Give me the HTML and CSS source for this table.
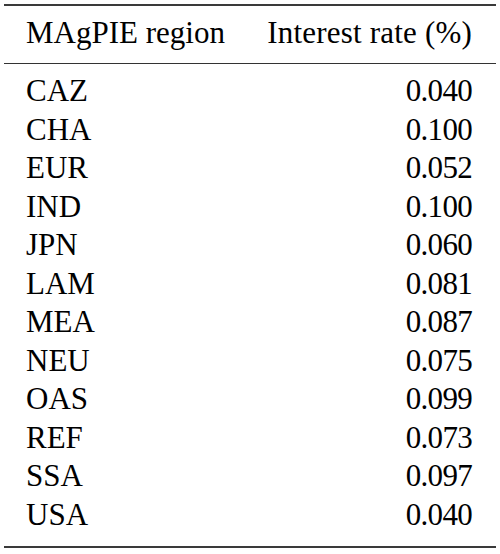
FILE: index.html
```html
<!DOCTYPE html>
<html lang="en">
<head>
    <meta charset="UTF-8">
    <title>Interest rates</title>
    <link rel="stylesheet" href="styles.css">
</head>
<body>
    <table class="rates">
        <thead>
            <tr><th class="col_region">MAgPIE region</th><th class="col_rate">Interest rate (%)</th></tr>
        </thead>
        <tbody>
            <tr><td>CAZ</td><td class="num">0.040</td></tr>
            <tr><td>CHA</td><td class="num">0.100</td></tr>
            <tr><td>EUR</td><td class="num">0.052</td></tr>
            <tr><td>IND</td><td class="num">0.100</td></tr>
            <tr><td>JPN</td><td class="num">0.060</td></tr>
            <tr><td>LAM</td><td class="num">0.081</td></tr>
            <tr><td>MEA</td><td class="num">0.087</td></tr>
            <tr><td>NEU</td><td class="num">0.075</td></tr>
            <tr><td>OAS</td><td class="num">0.099</td></tr>
            <tr><td>REF</td><td class="num">0.073</td></tr>
            <tr><td>SSA</td><td class="num">0.097</td></tr>
            <tr><td>USA</td><td class="num">0.040</td></tr>
        </tbody>
    </table>
</body>
</html>
```

FILE: styles.css
```css
*{
    margin: 0;
    padding: 0;
}
body{
    background: #fff;
    padding: 4px 4px 0;
    font-family: "Liberation Serif", "Times New Roman", serif;
    color: #000;
}
.rates{
    width: 492px;
    border-collapse: collapse;
    font-size: 31px;
    border-top: 2px solid #3a3a3a;
    border-bottom: 2px solid #3a3a3a;
}
.rates th,
.rates td{
    font-weight: normal;
    line-height: 38.5px;
    white-space: nowrap;
}
.rates th:first-child,
.rates td:first-child{
    padding-left: 22px;
}
.rates th:last-child,
.rates td:last-child{
    padding-right: 24px;
}
.rates thead th{
    padding-top: 7.5px;
    padding-bottom: 11px;
    border-bottom: 1.5px solid #333;
}
.col_region{
    text-align: left;
}
.col_rate{
    text-align: right;
    letter-spacing: 0.2px;
}
.num{
    text-align: right;
    letter-spacing: -0.7px;
}
.rates tbody tr:first-child td{
    padding-top: 8px;
}
.rates tbody tr:last-child td{
    padding-bottom: 11.5px;
}
```
